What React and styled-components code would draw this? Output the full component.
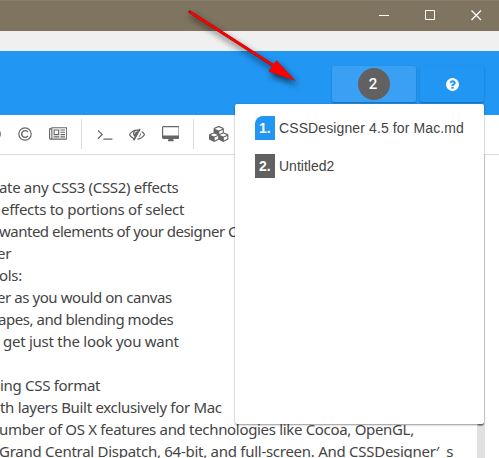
import React from 'react';
import styled, { createGlobalStyle } from 'styled-components';

const Global = createGlobalStyle`
  * { box-sizing: border-box; }
  body { margin: 0; overflow: hidden; background: #fff; }
`;

const Window = styled.div`
  position: relative;
  width: 499px;
  height: 458px;
  overflow: hidden;
  display: flex;
  flex-direction: column;
  background: #fff;
  font-family: "Liberation Sans", Arial, sans-serif;
`;
const TitleBar = styled.div`
  height: 31px;
  flex: none;
  background: #7f745f;
  border-top: 1px solid #887e6b;
  display: flex;
  justify-content: flex-end;
  gap: 35px;
  padding: 9px 17px 0 0;
  svg { display: block; }
`;
const MenuStrip = styled.div`
  height: 20px;
  flex: none;
  background: #f0f0f0;
`;
const Header = styled.header`
  height: 64px;
  flex: none;
  background: #2196f3;
  display: flex;
  justify-content: flex-end;
  gap: 4px;
  padding: 15px 15px 0 0;
`;
const HeaderButton = styled.button`
  width: ${p => p.$width}px;
  height: 36px;
  padding: 0;
  border: 0;
  border-radius: 2px;
  background: ${p => (p.$active ? '#3aa0f4' : '#2196f3')};
  box-shadow: 0 1px 2px rgba(0, 0, 0, 0.3);
  display: flex;
  align-items: center;
  justify-content: center;
`;
const Count = styled.span`
  width: 32px;
  height: 32px;
  border-radius: 50%;
  background: #616161;
  color: #fff;
  font: 500 15px/32px Roboto, sans-serif;
  text-align: center;
  padding-right: 2px;
`;
const Toolbar = styled.div`
  height: 40px;
  flex: none;
  border-bottom: 1px solid #ddd;
  display: flex;
  padding-top: 4px;
`;
const Tool = styled.div`
  width: ${p => p.$width}px;
  height: 30px;
  margin-left: ${p => p.$left || 0}px;
  flex: none;
  display: flex;
  align-items: center;
  justify-content: center;
`;
const Separator = styled.div`
  width: 1px;
  height: 30px;
  margin: 0 ${p => p.$right}px 0 ${p => p.$left}px;
  background: #ddd;
  flex: none;
`;
const GlyphSvg = styled.svg`
  display: block;
  flex: none;
  fill: ${p => p.$color || '#666'};
`;
const Editor = styled.main`
  flex: 1;
  display: flex;
  justify-content: space-between;
  overflow: hidden;
`;
const Lines = styled.div`
  padding-top: 21px;
  width: 477px;
  flex: none;
`;
const Line = styled.div`
  height: 22px;
  margin-left: ${p => p.$left}px;
  font: 15px/22px "Noto Sans", sans-serif;
  letter-spacing: ${p => p.$spacing || 0}px;
  color: #444;
  white-space: pre;
`;
const Scrollbar = styled.div`
  width: 8px;
  margin-right: 14px;
  background: #e1e1e1;
`;
const Thumb = styled.div`
  width: 7px;
  height: 271px;
  background: #999;
  border-radius: 0 0 4px 4px;
`;
const Dropdown = styled.div`
  position: absolute;
  left: 235px;
  top: 104px;
  width: 249px;
  height: 320px;
  padding: 12px 20px;
  background: #fff;
  border-radius: 2px;
  box-shadow: 0 1px 2px rgba(0, 0, 0, 0.4), 0 0 1px rgba(0, 0, 0, 0.25);
  display: flex;
  flex-direction: column;
  gap: 14px;
`;
const FileRow = styled.div`
  height: 24px;
  display: flex;
  gap: 4px;
  font-size: 14px;
  line-height: 24px;
  color: #444;
  white-space: nowrap;
`;
const FileNumber = styled.span`
  width: 20px;
  flex: none;
  background: ${p => (p.$active ? '#2196f3' : '#616161')};
  border-top-left-radius: ${p => (p.$active ? 8 : 0)}px;
  color: #fff;
  font-weight: bold;
  padding-left: 4px;
`;
const FileName = styled.span`
  letter-spacing: ${p => p.$spacing || 0}px;
`;
const Arrow = styled.svg`
  position: absolute;
  left: 0;
  top: 0;
  pointer-events: none;
  filter: drop-shadow(2px 4px 3px rgba(0, 0, 0, 0.65));
`;

const glyphs = {
  news: [2048, 'M1024 512h-384v384h384v-384zm128 640v128h-640v-128h640zm0-768v640h-640v-640h640zm640 768v128h-512v-128h512zm0-256v128h-512v-128h512zm0-256v128h-512v-128h512zm0-256v128h-512v-128h512zm-1536 960v-960h-128v960q0 26 19 45t45 19 45-19 19-45zm1664 0v-1088h-1536v1088q0 33-11 64h1483q26 0 45-19t19-45zm128-1216v1216q0 80-56 136t-136 56h-1664q-80 0-136-56t-56-136v-1088h256v-128h1792z'],
  terminal: [1792, 'M649 983l-466 466q-10 10-23 10t-23-10l-50-50q-10-10-10-23t10-23l393-393-393-393q-10-10-10-23t10-23l50-50q10-10 23-10t23 10l466 466q10 10 10 23t-10 23zm1079 457v64q0 14-9 23t-23 9h-960q-14 0-23-9t-9-23v-64q0-14 9-23t23-9h960q14 0 23 9t9 23z'],
  eye: [1792, 'M555 1335l78-141q-87-63-136-159t-49-203q0-121 61-225-229 117-381 353 167 258 427 375zm389-759q0-20-14-34t-34-14q-125 0-214.5 89.5t-89.5 214.5q0 20 14 34t34 14 34-14 14-34q0-86 61-147t147-61q20 0 34-14t14-34zm363-191q0 7-1 9-106 189-316 567t-315 566l-49 89q-10 16-28 16-12 0-134-70-16-10-16-28 0-12 44-87-143-65-263.5-173t-208.5-245q-20-31-20-69t20-69q153-235 380-371t496-136q89 0 180 17l54-97q10-16 28-16 5 0 18 6t31 15.5 33 18.5 31.5 18.5 19.5 11.5q16 10 16 27zm37 447q0 139-79 253.5t-209 164.5l280-502q8 45 8 84zm448 128q0 35-20 69-39 64-109 145-150 172-347.5 267t-419.5 95l74-132q212-18 392.5-137t301.5-307q-115-179-282-294l63-112q95 64 182.5 153t144.5 184q20 34 20 69z'],
  desktop: [1920, 'M1792 992v-832q0-13-9.5-22.5t-22.5-9.5h-1600q-13 0-22.5 9.5t-9.5 22.5v832q0 13 9.5 22.5t22.5 9.5h1600q13 0 22.5-9.5t9.5-22.5zm128-832v1088q0 66-47 113t-113 47h-544q0 37 16 77.5t32 71 16 43.5q0 26-19 45t-45 19h-512q-26 0-45-19t-19-45q0-14 16-44t32-70 16-78h-544q-66 0-113-47t-47-113v-1088q0-66 47-113t113-47h1600q66 0 113 47t47 113z'],
  cubes: [2304, 'M640 1632l384-192v-314l-384 164v342zm-64-454l404-173-404-173-404 173zm1088 454l384-192v-314l-384 164v342zm-64-454l404-173-404-173-404 173zm-448-293l384-165v-266l-384 164v267zm-64-379l441-189-441-189-441 189zm1088 518v416q0 36-19 67t-52 47l-448 224q-25 14-57 14t-57-14l-448-224q-4-2-7-4-2 2-7 4l-448 224q-25 14-57 14t-57-14l-448-224q-33-16-52-47t-19-67v-416q0-38 21.5-70t56.5-48l434-186v-400q0-38 21.5-70t56.5-48l448-192q23-10 50-10t50 10l448 192q35 16 56.5 48t21.5 70v400l434 186q36 16 57 48t21 70z'],
  help: [1792, 'M1024 1376v-192q0-14-9-23t-23-9h-192q-14 0-23 9t-9 23v192q0 14 9 23t23 9h192q14 0 23-9t9-23zm256-672q0-88-55.5-163t-138.5-116-170-41q-243 0-371 213-15 24 8 42l132 100q7 6 19 6 16 0 25-12 53-68 86-92 34-24 86-24 48 0 85.5 26t37.5 59q0 38-20 61t-68 45q-63 28-115.5 86.5t-52.5 125.5v36q0 14 9 23t23 9h192q14 0 23-9t9-23q0-19 21.5-49.5t54.5-49.5q32-18 49-28.5t46-35 44.5-48 28-60.5 12.5-81zm384 192q0 209-103 385.5t-279.5 279.5-385.5 103-385.5-103-279.5-279.5-103-385.5 103-385.5 279.5-279.5 385.5-103 385.5 103 279.5 279.5 103 385.5z'],
};

function Glyph({ name, size = 16, color }) {
  const [w, d] = glyphs[name];
  return (
    <GlyphSvg $color={color} width={(size * w) / 1792} height={size} viewBox={`0 0 ${w} 1792`}>
      <path d={d} />
    </GlyphSvg>
  );
}

const lines = [
  { text: 'ate any CSS3 (CSS2) effects', left: -1, spacing: -0.33 },
  { text: 'effects to portions of select', left: 1, spacing: -0.28 },
  { text: 'wanted elements of your designer CSS', left: -1, spacing: -0.5 },
  { text: 'er', left: -3, spacing: -0.3 },
  { text: 'ols:', left: -1, spacing: -0.3 },
  { text: 'er as you would on canvas', left: -3, spacing: -0.43 },
  { text: 'apes, and blending modes', left: -2, spacing: -0.46 },
  { text: 'get just the look you want', left: 3, spacing: -0.26 },
  { text: '', left: 0 },
  { text: 'ing CSS format', left: 0, spacing: -0.3 },
  { text: 'th layers Built exclusively for Mac', left: 0, spacing: -0.31 },
  { text: 'umber of OS X features and technologies like Cocoa, OpenGL,', left: -1, spacing: -0.32 },
  { text: 'Grand Central Dispatch, 64-bit, and full-screen. And CSSDesigner′  s', left: -1, spacing: -0.27 },
];

export default function App() {
  return (
    <Window>
      <Global />
      <TitleBar>
        <svg width="11" height="11" stroke="#fff"><path d="M0 5.5h10" /></svg>
        <svg width="11" height="11" fill="none" stroke="#fff"><path d="M.5 .5h9v9h-9z" /></svg>
        <svg width="11" height="11" stroke="#fff" strokeWidth="1.2"><path d="M.5 .5l9.5 9.5M10 .5L.5 10" /></svg>
      </TitleBar>
      <MenuStrip />
      <Header>
        <HeaderButton $width={84} $active><Count>2</Count></HeaderButton>
        <HeaderButton $width={64}><Glyph name="help" size={15} color="#fff" /></HeaderButton>
      </Header>
      <Toolbar>
        <Tool $width={14} $left={-13}>
          <svg width="14" height="14" fill="none" stroke="#666" strokeWidth="1.3"><circle cx="7" cy="7" r="6.2" /></svg>
        </Tool>
        <Tool $width={14} $left={17}>
          <svg width="14" height="14" fill="none" stroke="#666" strokeWidth="1.2">
            <circle cx="7" cy="7" r="6.2" />
            <path d="M9.9 5.1A3.4 3.4 0 1 0 9.9 8.9" strokeWidth="1.4" />
          </svg>
        </Tool>
        <Tool $width={20} $left={16}><Glyph name="news" /></Tool>
        <Separator $left={13} $right={14} />
        <Tool $width={18}><Glyph name="terminal" /></Tool>
        <Tool $width={18} $left={14}><Glyph name="eye" /></Tool>
        <Tool $width={18} $left={15.5}><Glyph name="desktop" size={16.5} /></Tool>
        <Separator $left={13.5} $right={15} />
        <Tool $width={21}><Glyph name="cubes" /></Tool>
      </Toolbar>
      <Editor>
        <Lines>
          {lines.map((l, i) => (
            <Line key={i} $left={l.left} $spacing={l.spacing}>{l.text}</Line>
          ))}
        </Lines>
        <Scrollbar><Thumb /></Scrollbar>
      </Editor>
      <Dropdown>
        <FileRow><FileNumber $active>1.</FileNumber><FileName $spacing={0.11}>CSSDesigner 4.5 for Mac.md</FileName></FileRow>
        <FileRow><FileNumber>2.</FileNumber><FileName>Untitled2</FileName></FileRow>
      </Dropdown>
      <Arrow width="320" height="110">
        <path d="M190 12L274 66" stroke="#7b1712" strokeWidth="3.2" strokeLinecap="round" />
        <path d="M190 12L276 67" stroke="#f00" strokeWidth="2.6" />
        <path d="M276.5 60.5L295 80.5L269 71.5L272 66Z" fill="#f00" stroke="#a51919" strokeWidth=".5" />
      </Arrow>
    </Window>
  );
}
